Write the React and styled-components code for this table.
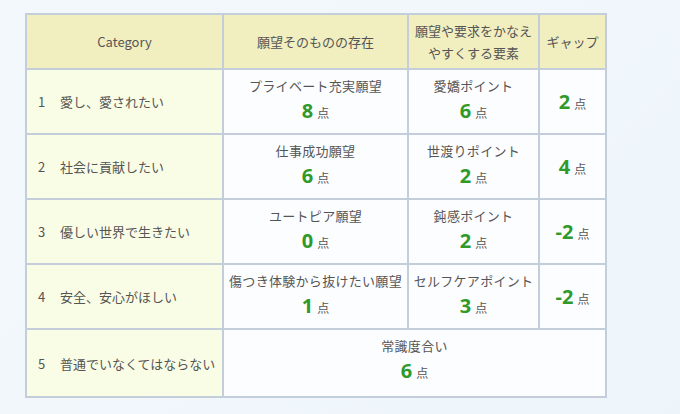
import React from "react";
import styled, { createGlobalStyle } from "styled-components";

const Global = createGlobalStyle`
  html, body { margin: 0; padding: 0; }
  body {
    background: linear-gradient(135deg, #f3f8fc 0%, #eef5fa 100%);
    font-family: "Noto Sans CJK JP", "Noto Sans", sans-serif;
    color: #555;
    min-height: 414px;
  }
`;

const Page = styled.div`
  padding: 13px 0 0 25px;
`;

const Table = styled.table`
  border-collapse: collapse;
  border: 2px solid #bfcbd7;
  font-size: 13px;
  table-layout: fixed;
`;

const Th = styled.th`
  background: #f1eec0;
  border: 2px solid #c3ceda;
  font-weight: normal;
  color: #555;
  height: 53px;
  padding: 0 4px;
  line-height: 22px;
  text-align: center;
  vertical-align: middle;
  width: ${(p) => p.$w}px;
`;

const CatCell = styled.td`
  background: #fafde6;
  border: 2px solid #c3ceda;
  height: ${(p) => p.$h}px;
  padding: 0 0 0 11px;
  vertical-align: middle;
  white-space: nowrap;
`;

const Num = styled.span`
  display: inline-block;
  width: 22px;
`;

const Cell = styled.td`
  background: #fcfdff;
  border: 2px solid #c3ceda;
  text-align: center;
  vertical-align: ${(p) => (p.$top ? "top" : "middle")};
  padding: ${(p) => (p.$top ? "6px 2px 0" : "0 2px")};
  white-space: nowrap;
`;

const Label = styled.div`
  line-height: 20px;
  letter-spacing: 0.3px;
`;

const Score = styled.div`
  margin-top: 2px;
  line-height: 26px;
`;

const Big = styled.span`
  color: #2f9a2a;
  font-weight: bold;
  font-size: 20px;
  font-family: "Open Sans", "Noto Sans", sans-serif;
`;

const Unit = styled.span`
  font-size: 12px;
  margin-left: 4px;
`;

const Pt = ({ v }) => (
  <>
    <Big>{v}</Big>
    <Unit>点</Unit>
  </>
);

const rows = [
  ["1", "愛し、愛されたい", "プライベート充実願望", "8", "愛嬌ポイント", "6", "2"],
  ["2", "社会に貢献したい", "仕事成功願望", "6", "世渡りポイント", "2", "4"],
  ["3", "優しい世界で生きたい", "ユートピア願望", "0", "鈍感ポイント", "2", "-2"],
  ["4", "安全、安心がほしい", "傷つき体験から抜けたい願望", "1", "セルフケアポイント", "3", "-2"],
];

export default function App() {
  return (
    <>
      <Global />
      <Page>
        <Table>
          <thead>
            <tr>
              <Th $w={187}>Category</Th>
              <Th $w={175}>願望そのものの存在</Th>
              <Th $w={121}>
                願望や要求をかなえ
                <br />
                やすくする要素
              </Th>
              <Th $w={57}>ギャップ</Th>
            </tr>
          </thead>
          <tbody>
            {rows.map((r) => (
              <tr key={r[0]}>
                <CatCell $h={63}>
                  <Num>{r[0]}</Num>
                  {r[1]}
                </CatCell>
                <Cell $top>
                  <Label>{r[2]}</Label>
                  <Score>
                    <Pt v={r[3]} />
                  </Score>
                </Cell>
                <Cell $top>
                  <Label>{r[4]}</Label>
                  <Score>
                    <Pt v={r[5]} />
                  </Score>
                </Cell>
                <Cell>
                  <Pt v={r[6]} />
                </Cell>
              </tr>
            ))}
            <tr>
              <CatCell $h={66}>
                <Num>5</Num>
                普通でいなくてはならない
              </CatCell>
              <Cell $top colSpan={3}>
                <Label>常識度合い</Label>
                <Score>
                  <Pt v="6" />
                </Score>
              </Cell>
            </tr>
          </tbody>
        </Table>
      </Page>
    </>
  );
}
